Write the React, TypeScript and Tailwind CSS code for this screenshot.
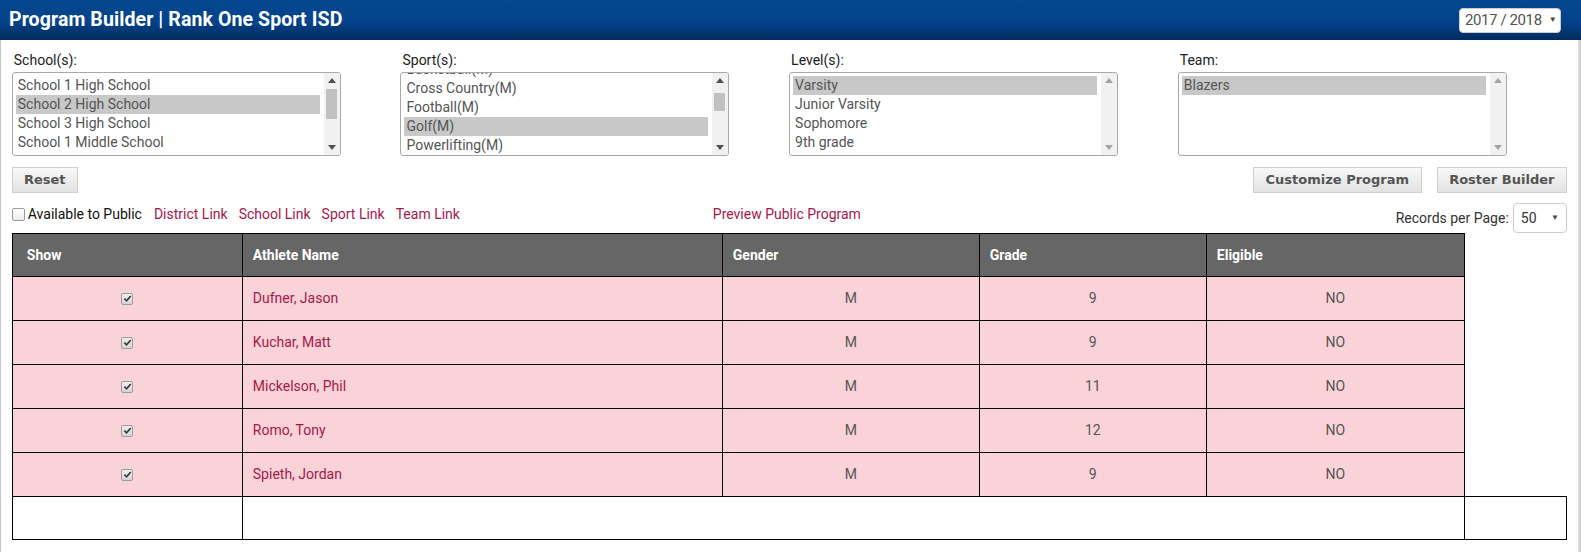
import React from "react";

type ListItem = { label: string; selected?: boolean };

interface ListBoxProps {
  items: ListItem[];
  offset?: "none" | "scrolled";
  thumb?: "school" | "sport" | "none";
}

const schools: ListItem[] = [
  { label: "School 1 High School" },
  { label: "School 2 High School", selected: true },
  { label: "School 3 High School" },
  { label: "School 1 Middle School" },
];

const sports: ListItem[] = [
  { label: "Basketball(M)" },
  { label: "Cross Country(M)" },
  { label: "Football(M)" },
  { label: "Golf(M)", selected: true },
  { label: "Powerlifting(M)" },
];

const levels: ListItem[] = [
  { label: "Varsity", selected: true },
  { label: "Junior Varsity" },
  { label: "Sophomore" },
  { label: "9th grade" },
];

const teams: ListItem[] = [{ label: "Blazers", selected: true }];

const athletes = [
  { name: "Dufner, Jason", gender: "M", grade: "9", eligible: "NO" },
  { name: "Kuchar, Matt", gender: "M", grade: "9", eligible: "NO" },
  { name: "Mickelson, Phil", gender: "M", grade: "11", eligible: "NO" },
  { name: "Romo, Tony", gender: "M", grade: "12", eligible: "NO" },
  { name: "Spieth, Jordan", gender: "M", grade: "9", eligible: "NO" },
];

function ListBox({ items, offset = "none", thumb = "none" }: ListBoxProps) {
  const active = thumb !== "none";
  return (
    <div className="flex h-[84px] w-[329px] overflow-hidden rounded-[3px] border border-[#a9a9a9] bg-white">
      <div className="flex-1 overflow-hidden">
        <div className={offset === "scrolled" ? "-mt-[13px]" : "pt-[3px]"}>
          {items.map((item) => (
            <div
              key={item.label}
              className={
                item.selected
                  ? "ml-[3px] mr-[4px] h-[19px] whitespace-nowrap bg-[#c8c8c8] pl-[2px] text-[14px] leading-[19px] text-[#555]"
                  : "ml-[3px] mr-[4px] h-[19px] whitespace-nowrap pl-[2px] text-[14px] leading-[19px] text-[#555]"
              }
            >
              {item.label}
            </div>
          ))}
        </div>
      </div>
      <div className="relative w-[16px] bg-[#f1f1f1]">
        <span
          className={
            active
              ? "absolute left-[4px] top-[5px] h-0 w-0 border-x-[4px] border-b-[5px] border-x-transparent border-b-[#505050]"
              : "absolute left-[4px] top-[5px] h-0 w-0 border-x-[4px] border-b-[5px] border-x-transparent border-b-[#a3a3a3]"
          }
        />
        {thumb === "school" && (
          <span className="absolute left-[2px] top-[16px] h-[30px] w-[11px] bg-[#c1c1c1]" />
        )}
        {thumb === "sport" && (
          <span className="absolute left-[2px] top-[20px] h-[18px] w-[11px] bg-[#c1c1c1]" />
        )}
        <span
          className={
            active
              ? "absolute bottom-[5px] left-[4px] h-0 w-0 border-x-[4px] border-t-[5px] border-x-transparent border-t-[#505050]"
              : "absolute bottom-[5px] left-[4px] h-0 w-0 border-x-[4px] border-t-[5px] border-x-transparent border-t-[#a3a3a3]"
          }
        />
      </div>
    </div>
  );
}

function Filter({ label, children }: { label: string; children: React.ReactNode }) {
  return (
    <div className="flex flex-col">
      <label className="h-[18px] pl-[2px] text-[14px] leading-[18px] text-[#222]">{label}</label>
      <div className="mt-[3px]">{children}</div>
    </div>
  );
}

function CheckMark() {
  return (
    <span className="inline-flex h-[12px] w-[12px] items-center justify-center rounded-[2px] border border-[#9d9d9d] bg-[linear-gradient(to_bottom,#f0f0f0,#d4d4d4)]">
      <svg viewBox="0 0 10 10" className="h-[9px] w-[9px]">
        <path d="M1.5 5.2 L4 7.6 L8.6 2.2" fill="none" stroke="#3c3c3c" strokeWidth="1.9" />
      </svg>
    </span>
  );
}

function GrayButton({ label, width }: { label: string; width: string }) {
  return (
    <button
      className={`${width} h-[26px] border border-[#d0d0d0] bg-[linear-gradient(to_bottom,#f8f8f8,#e2e2e2)] text-center font-['DejaVu_Sans',sans-serif] text-[13px] font-bold text-[#555]`}
    >
      {label}
    </button>
  );
}

export default function App() {
  const headCell =
    "flex items-center border-l border-t border-black bg-[#666] text-[14px] font-bold text-white";
  const bodyCell = "flex items-center border-l border-t border-black bg-[#f9d3d8] text-[14px] text-[#555]";

  return (
    <div className="h-[552px] w-[1581px] overflow-hidden bg-white font-['Roboto','Liberation_Sans',sans-serif]">
      <header className="flex h-[40px] items-center justify-between bg-[linear-gradient(to_bottom,#04488f_0%,#03438b_55%,#022b5c_100%)] pl-[9px] pr-[20px]">
        <h1 className="whitespace-nowrap text-[19.5px] font-bold tracking-[0.1px] text-white">
          Program Builder | Rank One Sport ISD
        </h1>
        <div className="flex h-[25px] w-[102px] shrink-0 items-center whitespace-nowrap rounded-[4px] border border-[#cccccc] bg-white pl-[5px] text-[15px] tracking-[-0.4px] text-[#555]">
          <span>2017 / 2018</span>
          <span className="ml-[7px] text-[8px] text-[#444]">▼</span>
        </div>
      </header>

      <div className="flex h-[512px]">
        <div className="w-px bg-[#c6c6c6]" />
        <main className="flex-1 pl-[11px] pr-[11px]">
          <div className="grid grid-cols-[388.67px_388.67px_388.67px_388.67px] pt-[11px]">
            <Filter label="School(s):">
              <ListBox items={schools} thumb="school" />
            </Filter>
            <Filter label="Sport(s):">
              <ListBox items={sports} offset="scrolled" thumb="sport" />
            </Filter>
            <Filter label="Level(s):">
              <ListBox items={levels} />
            </Filter>
            <Filter label="Team:">
              <ListBox items={teams} />
            </Filter>
          </div>

          <div className="mt-[11px] flex items-center">
            <GrayButton label="Reset" width="w-[66px]" />
            <div className="ml-auto flex gap-[15px]">
              <GrayButton label="Customize Program" width="w-[169px]" />
              <GrayButton label="Roster Builder" width="w-[130px]" />
            </div>
          </div>

          <div className="flex h-[40px] items-start">
            <div className="mt-[11px] flex h-[20px] w-[701px] items-center text-[14px] leading-[20px]">
              <span className="h-[13px] w-[13px] rounded-[2px] border border-[#9a9a9a] bg-[linear-gradient(to_bottom,#ffffff,#ececec)]" />
              <span className="ml-[3px] text-[#111]">Available to Public</span>
              <a className="ml-[12px] text-[#a8174a]">District Link</a>
              <a className="ml-[11px] text-[#a8174a]">School Link</a>
              <a className="ml-[11px] text-[#a8174a]">Sport Link</a>
              <a className="ml-[11px] text-[#a8174a]">Team Link</a>
            </div>
            <a className="mt-[11px] text-[14px] leading-[20px] text-[#a8174a]">Preview Public Program</a>
            <div className="ml-auto mt-[10px] flex h-[30px] items-center">
              <span className="text-[14px] text-[#333]">Records per Page:</span>
              <div className="ml-[4px] flex h-[30px] w-[54px] items-center rounded-[4px] border border-[#cccccc] pl-[7px] text-[14px] text-[#333]">
                <span>50</span>
                <span className="ml-auto mr-[7px] text-[8px] text-[#444]">▼</span>
              </div>
            </div>
          </div>

          <div className="flex flex-col">
            <div className="flex h-[43px]">
              <div className={`${headCell} w-[230px] pl-[14px]`}>Show</div>
              <div className={`${headCell} w-[480px] pl-[10px]`}>Athlete Name</div>
              <div className={`${headCell} w-[257px] pl-[10px]`}>Gender</div>
              <div className={`${headCell} w-[227px] pl-[10px]`}>Grade</div>
              <div className={`${headCell} w-[259px] border-r pl-[10px]`}>Eligible</div>
            </div>
            {athletes.map((a) => (
              <div key={a.name} className="flex h-[44px]">
                <div className={`${bodyCell} w-[230px] justify-center`}>
                  <CheckMark />
                </div>
                <div className={`${bodyCell} w-[480px] pl-[10px] text-[#a8174a]`}>{a.name}</div>
                <div className={`${bodyCell} w-[257px] justify-center`}>{a.gender}</div>
                <div className={`${bodyCell} w-[227px] justify-center`}>{a.grade}</div>
                <div className={`${bodyCell} w-[259px] justify-center border-r`}>{a.eligible}</div>
              </div>
            ))}
            <div className="flex h-[44px]">
              <div className="w-[230px] border-y border-l border-black" />
              <div className="w-[480px] border-y border-l border-black" />
              <div className="w-[257px] border-y border-black" />
              <div className="w-[227px] border-y border-black" />
              <div className="w-[258px] border-y border-black" />
              <div className="w-[103px] border border-black" />
            </div>
          </div>
        </main>
        <div className="w-[4px] bg-[linear-gradient(to_right,#e4e4e4,#c9c9c9)]" />
      </div>
    </div>
  );
}
